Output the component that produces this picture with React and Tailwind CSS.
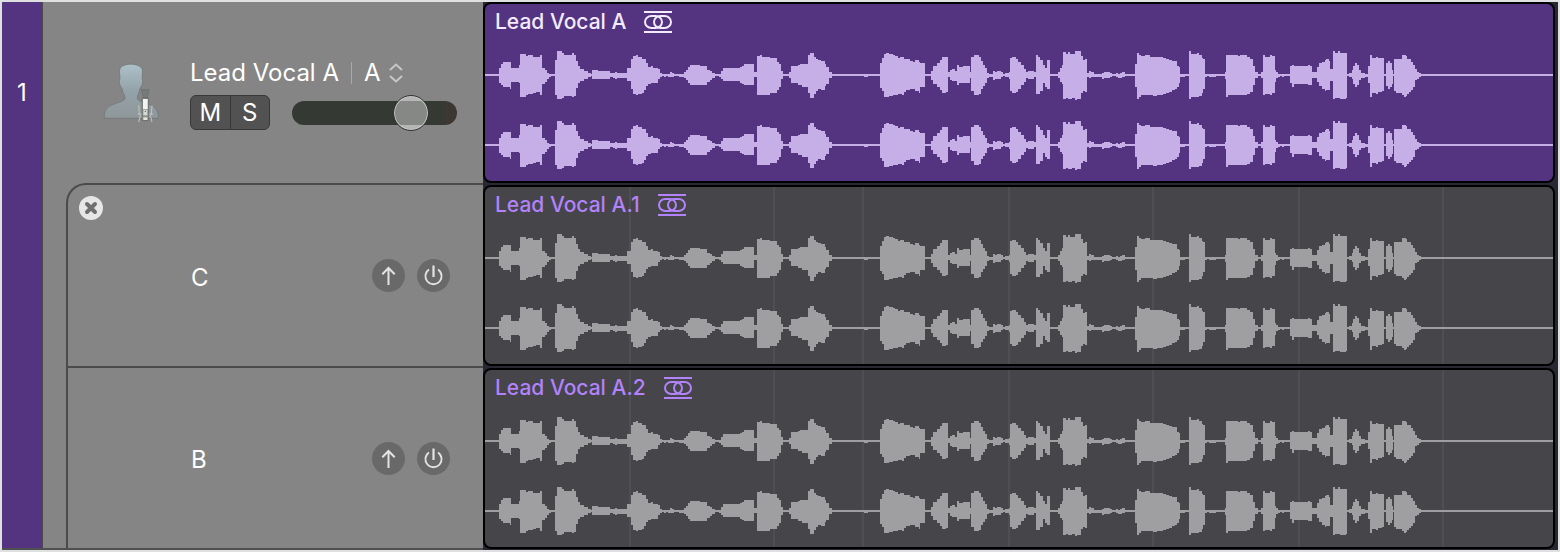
import React, { useState } from "react";
import { clsx } from "clsx";

// each step: [x, height above the centre line, height below it]
const WAVE = [
  [0, 1, 1], [14, 7, 8], [16, 11, 10], [18, 13, 12], [25, 13, 14], [26, 7, 7], [34, 10, 8],
  [35, 21, 22], [41, 19, 20], [43, 20, 19], [48, 18, 18], [51, 18, 17], [55, 20, 20], [57, 7, 9],
  [60, 5, 7], [62, 2, 4], [64, 1, 2], [66, 1, 1], [70, 15, 20], [72, 24, 24], [77, 22, 23],
  [79, 20, 21], [87, 22, 22], [89, 20, 21], [91, 14, 13], [93, 9, 8], [95, 6, 6], [99, 4, 4],
  [103, 2, 2], [106, 1, 1], [107, 5, 4], [113, 4, 4], [125, 2, 2], [128, 2, 3], [130, 3, 4],
  [132, 2, 3], [142, 7, 6], [146, 16, 14], [148, 19, 19], [151, 20, 20], [153, 18, 19],
  [157, 16, 18], [159, 16, 15], [161, 12, 11], [163, 8, 9], [166, 9, 8], [168, 7, 8], [173, 6, 4],
  [175, 2, 2], [177, 1, 1], [179, 1, 2], [181, 1, 1], [183, 1, 2], [185, 3, 2], [187, 2, 2],
  [189, 1, 1], [194, 1, 2], [199, 3, 3], [201, 5, 5], [203, 8, 8], [205, 10, 10], [215, 9, 10],
  [222, 5, 7], [225, 4, 5], [227, 2, 3], [230, 1, 1], [234, 1, 2], [236, 4, 4], [238, 7, 6],
  [255, 8, 8], [257, 9, 9], [259, 11, 10], [269, 3, 2], [272, 19, 20], [275, 20, 20],
  [277, 18, 20], [285, 17, 18], [292, 13, 15], [294, 11, 12], [296, 4, 4], [298, 1, 1],
  [304, 3, 3], [306, 9, 8], [313, 10, 10], [315, 11, 10], [317, 11, 12], [323, 20, 18],
  [325, 22, 23], [329, 18, 19], [331, 16, 16], [333, 15, 14], [336, 14, 15], [340, 11, 11],
  [341, 8, 9], [344, 3, 3], [347, 1, 1], [379, 1, 2], [383, 1, 1], [395, 12, 13], [397, 17, 16],
  [399, 21, 22], [401, 22, 22], [404, 21, 21], [408, 20, 20], [410, 19, 20], [413, 17, 19],
  [415, 18, 19], [417, 18, 20], [419, 16, 17], [421, 16, 15], [425, 14, 14], [428, 13, 14],
  [430, 15, 16], [434, 13, 18], [435, 12, 12], [440, 1, 1], [446, 4, 5], [448, 9, 9],
  [452, 12, 12], [455, 15, 15], [457, 18, 18], [461, 18, 17], [463, 3, 2], [465, 5, 5],
  [467, 6, 6], [470, 4, 6], [472, 10, 10], [474, 8, 8], [478, 9, 8], [485, 3, 3], [486, 18, 16],
  [489, 20, 20], [494, 18, 19], [496, 14, 14], [498, 10, 11], [500, 7, 8], [502, 2, 3],
  [504, 1, 2], [508, 4, 5], [510, 3, 4], [512, 4, 4], [516, 3, 2], [518, 1, 1], [520, 2, 2],
  [524, 3, 4], [525, 17, 16], [527, 18, 18], [531, 16, 17], [533, 13, 14], [536, 10, 10],
  [539, 6, 7], [541, 3, 3], [543, 4, 4], [549, 3, 2], [551, 20, 19], [553, 18, 19],
  [555, 15, 16], [558, 10, 8], [560, 7, 12], [562, 15, 14], [565, 1, 1], [573, 3, 3],
  [575, 7, 7], [577, 10, 9], [578, 23, 24], [581, 21, 23], [583, 23, 24], [585, 21, 24],
  [587, 21, 23], [590, 24, 25], [592, 24, 24], [596, 19, 18], [598, 15, 16], [600, 16, 17],
  [602, 2, 2], [604, 4, 3], [606, 3, 2], [609, 1, 2], [617, 2, 4], [619, 3, 3], [625, 2, 2],
  [627, 1, 1], [631, 2, 2], [633, 1, 3], [635, 2, 3], [637, 3, 2], [640, 1, 1], [650, 11, 12],
  [652, 22, 24], [654, 20, 22], [656, 19, 20], [660, 20, 20], [665, 18, 20], [668, 18, 21],
  [672, 18, 20], [678, 17, 19], [681, 16, 18], [684, 15, 17], [687, 14, 15], [690, 14, 14],
  [692, 9, 12], [694, 8, 8], [695, 1, 2], [700, 1, 1], [704, 24, 24], [706, 21, 22],
  [712, 22, 22], [714, 20, 21], [717, 17, 18], [718, 16, 14], [720, 1, 2], [722, 1, 1],
  [724, 1, 2], [731, 1, 1], [740, 3, 4], [741, 20, 22], [743, 20, 20], [753, 19, 20],
  [755, 20, 20], [762, 18, 19], [765, 16, 17], [768, 9, 10], [770, 3, 3], [773, 1, 1],
  [776, 3, 3], [778, 20, 20], [780, 18, 19], [785, 20, 20], [787, 19, 18], [790, 5, 7],
  [791, 3, 3], [793, 1, 2], [795, 1, 1], [797, 1, 2], [799, 1, 1], [805, 9, 8], [807, 10, 12],
  [809, 9, 9], [823, 10, 10], [825, 9, 10], [827, 3, 3], [832, 8, 7], [834, 12, 11],
  [837, 13, 14], [840, 15, 16], [841, 16, 15], [844, 14, 15], [845, 6, 6], [848, 24, 24],
  [850, 22, 23], [853, 24, 23], [855, 22, 24], [861, 22, 23], [862, 1, 1], [864, 2, 2],
  [867, 5, 4], [868, 9, 9], [870, 12, 12], [872, 10, 10], [874, 5, 5], [876, 2, 3], [880, 1, 2],
  [883, 9, 8], [885, 20, 22], [887, 17, 18], [891, 18, 19], [893, 17, 17], [897, 17, 16],
  [899, 1, 1], [901, 12, 11], [903, 14, 14], [905, 12, 12], [907, 5, 9], [908, 1, 1],
  [909, 16, 16], [911, 16, 18], [917, 20, 20], [919, 20, 22], [921, 19, 21], [922, 16, 19],
  [924, 16, 17], [926, 13, 15], [928, 10, 12], [930, 6, 5], [932, 3, 4], [934, 2, 2],
  [936, 1, 1],
];

const WIDTH = 1068;
const BEATS = [145, 289, 378, 524, 668, 814, 958];

const wavePath = (centre) => {
  let top = "";
  let bottom = "";
  WAVE.forEach(([x, up, down], i) => {
    const next = i < WAVE.length - 1 ? WAVE[i + 1][0] : WIDTH;
    top += `L${x} ${centre - up}L${next} ${centre - up}`;
    bottom = `L${next} ${centre + down}L${x} ${centre + down}` + bottom;
  });
  return `M0 ${centre}${top}${bottom}Z`;
};

const StereoIcon = () => (
  <svg className="w-7 h-[22px]" viewBox="0 0 28 22" fill="none" stroke="currentColor" strokeWidth="2">
    <path d="M0 1H28M0 21H28" />
    <rect x="1" y="5" width="17" height="12" rx="6.5" />
    <rect x="10" y="5" width="17" height="12" rx="6.5" />
  </svg>
);

const SingerIcon = () => (
  <svg className="w-[60px] h-[62px] shrink-0" viewBox="306 182 180 186">
    <defs>
      <linearGradient id="singer" x1="0" y1="0" x2="0" y2="1">
        <stop offset="0" stopColor="#adc0c8" />
        <stop offset="0.5" stopColor="#93a2a9" />
        <stop offset="1" stopColor="#8f979a" />
      </linearGradient>
    </defs>
    <path
      d="M313 351C311 326 321 315 343 308C362 301 373 299 375 291L374 283C369 276 367 268 366 260C360 256 358 247 358 238C360 235 360 228 359 218C357 202 362 197 369 193C383 187 403 187 415 193C424 197 429 202 427 218C426 228 426 235 428 238C428 247 426 256 420 260C419 268 417 276 413 283L412 291C414 299 425 301 444 308C465 315 476 326 475 351Z"
      fill="url(#singer)"
      stroke="#6b7172"
      strokeWidth="2"
    />
    <path d="M424 265H447L442 290H430Z" fill="#777b7a" stroke="#666a69" strokeWidth="2" />
    <path
      d="M416 312L418 340L428 350M456 312L454 340L444 350M413 338H459M416 362L420 346M456 362L452 346"
      stroke="#c2c6c2"
      strokeWidth="3"
      fill="none"
    />
    <rect x="426" y="290" width="20" height="68" rx="3" fill="#8b8f8c" stroke="#60645f" strokeWidth="2" />
    <rect x="429" y="293" width="14" height="30" fill="#f2f4f1" />
    <rect x="430" y="325" width="12" height="17" fill="#d5d8d3" />
    <circle cx="436" cy="330" r="2" fill="#555" />
    <rect x="430" y="348" width="12" height="8" fill="#e2e4e0" />
  </svg>
);

const Region = ({ name, active }) => (
  <div
    className={clsx(
      "grid h-[181px] border-2 border-black rounded-[8px] overflow-hidden",
      active ? "bg-[#543480] text-[#f3ebff]" : "bg-[#464549] text-[#b283fb]"
    )}
  >
    <svg
      className="[grid-area:1/1] w-full h-[177px]"
      viewBox="0 0 1068 177"
      preserveAspectRatio="none"
      shapeRendering="crispEdges"
    >
      {!active &&
        BEATS.map((x) => <rect key={x} x={x - 1} y="0" width="2" height="177" fill="#4f4e52" />)}
      <g className={active ? "fill-[#c5afe6]" : "fill-[#9f9fa1]"}>
        <path d={wavePath(71)} />
        <path d={wavePath(141)} />
      </g>
    </svg>
    <div className="[grid-area:1/1] self-start flex items-center gap-[18px] h-9 pl-[10px] text-[21px] font-medium">
      <span>{name}</span>
      <StereoIcon />
    </div>
  </div>
);

const TakeLane = ({ name, first }) => (
  <div
    className={clsx(
      "flex items-center border-t-2 border-l-2 border-[#4b4b4b] ml-[23px]",
      first ? "h-[183px] rounded-tl-[20px]" : "h-[182px]"
    )}
  >
    <div className="w-[123px] self-start pt-[11px] pl-[11px]">
      {first && (
        <button aria-label="Close" className="block rounded-full bg-[#e6e6e6]">
          <svg className="size-6" viewBox="0 0 24 24" stroke="#6f6f6f" strokeWidth="4" strokeLinecap="round">
            <path d="M8 8L16 16M16 8L8 16" />
          </svg>
        </button>
      )}
    </div>
    <span className="flex-1 pt-1 text-2xl text-white">{name}</span>
    <div className="flex gap-3 pr-[33px]">
      <button aria-label="Export take" className="rounded-full bg-[#696969]">
        <svg className="size-[33px]" viewBox="0 0 33 33" fill="none" stroke="#e3e3e3" strokeWidth="2">
          <path d="M16.5 26V9.5M10.3 15.3L16.5 9L22.7 15.3" />
        </svg>
      </button>
      <button aria-label="Toggle take" className="rounded-full bg-[#696969]">
        <svg className="size-[33px]" viewBox="0 0 33 33" fill="none" stroke="#e3e3e3" strokeWidth="1.8">
          <path d="M16.5 6.5V18" strokeWidth="2.2" />
          <path d="M12 10.4A8.1 8.1 0 1 0 21 10.4" />
        </svg>
      </button>
    </div>
  </div>
);

const App = () => {
  const [volume, setVolume] = useState(78);
  const [take, setTake] = useState("A");

  return (
    <div className="flex p-[2px] bg-[#dfe0e0] font-['Inter',sans-serif]">
      <div className="flex shrink-0 w-[481px] bg-[#858585] border-b-2 border-[#4f4f4f]">
        <div className="w-[41px] bg-[#543480] border-r border-[#4b4b4b]">
          <div className="flex items-center justify-center h-[181px] text-2xl text-white">1</div>
        </div>
        <div className="flex-1">
          <div className="flex items-center h-[181px] pl-[59px]">
            <SingerIcon />
            <div className="ml-7">
              <div className="flex items-center h-8 pt-1 text-2xl text-white">
                <span>Lead Vocal A</span>
                <span className="w-px h-[22px] mx-3 bg-[#a9a9a9]" />
                <label className="relative flex items-center">
                  <select
                    aria-label="Take"
                    value={take}
                    onChange={(e) => setTake(e.target.value)}
                    className="w-11 appearance-none bg-transparent outline-none"
                  >
                    <option>A</option>
                    <option>B</option>
                    <option>C</option>
                  </select>
                  <svg
                    className="absolute right-1 w-4 h-5 pointer-events-none"
                    viewBox="0 0 16 20"
                    fill="none"
                    stroke="#c6c6c6"
                    strokeWidth="2"
                  >
                    <path d="M2 7L8 1.5L14 7M2 13L8 18.5L14 13" />
                  </svg>
                </label>
              </div>
              <div className="flex items-center mt-2">
                <div className="flex w-20 h-[35px] bg-[#525252] border border-[#383838] rounded-[6px] text-2xl text-white">
                  <button className="flex-1 border-r border-[#383838]">M</button>
                  <button className="flex-1">S</button>
                </div>
                <input
                  type="range"
                  aria-label="Volume"
                  value={volume}
                  onChange={(e) => setVolume(e.target.value)}
                  className="w-[165px] h-6 ml-[22px] appearance-none rounded-full bg-linear-to-r from-[#343934] from-90% to-[#3d3732] to-95% [&::-webkit-slider-thumb]:appearance-none [&::-webkit-slider-thumb]:size-9 [&::-webkit-slider-thumb]:rounded-full [&::-webkit-slider-thumb]:bg-white/40 [&::-webkit-slider-thumb]:border [&::-webkit-slider-thumb]:border-[#303030] [&::-webkit-slider-thumb]:shadow-[inset_0_0_0_1px_#c4c4c4]"
                />
              </div>
            </div>
          </div>
          <TakeLane name="C" first />
          <TakeLane name="B" />
        </div>
      </div>
      <div className="flex-1 flex flex-col gap-[2px] pr-[3px] pb-px bg-[#2a2735]">
        <Region name="Lead Vocal A" active />
        <Region name="Lead Vocal A.1" />
        <Region name="Lead Vocal A.2" />
      </div>
    </div>
  );
};

export default App;
